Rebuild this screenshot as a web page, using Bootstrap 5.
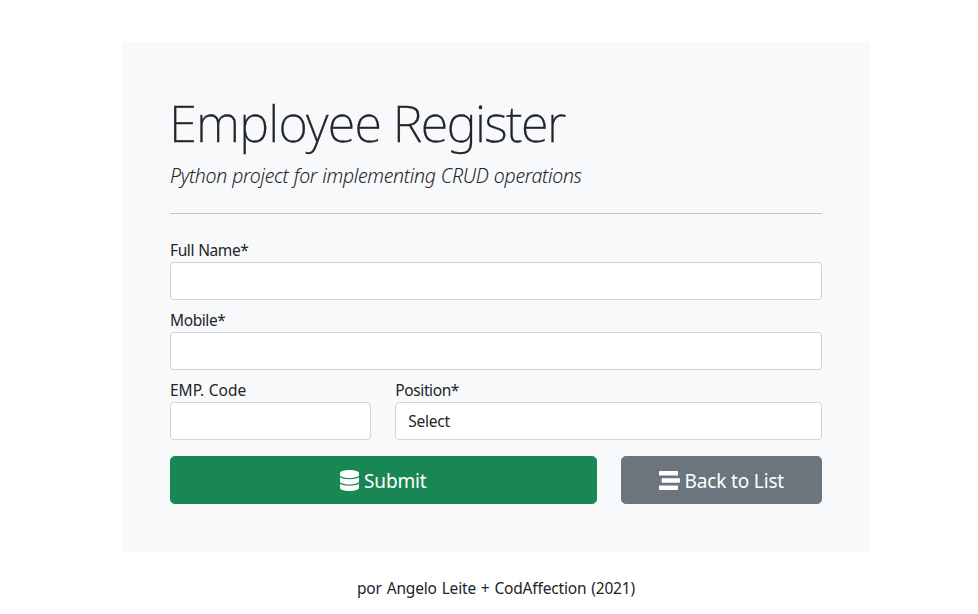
<!DOCTYPE html>
<html lang="en">
<head>
<meta charset="utf-8">
<title>Employee Register</title>
<meta name="viewport" content="width=device-width, initial-scale=1">
<link href="https://cdn.jsdelivr.net/npm/bootstrap@5.3.0/dist/css/bootstrap.min.css" rel="stylesheet">
<style>
body { font-family: "Noto Sans", "Open Sans", sans-serif; overflow: hidden; }
.page { width: 748px; margin-left: 122px; padding-top: 42px; }
.title { font-size: 50.5px; font-weight: 200; line-height: 66px; margin: 0 0 4px -1px; letter-spacing: -1.6px; white-space: nowrap; -webkit-text-stroke: .3px currentColor; }
.title-lead { letter-spacing: -.75px; }
.subtitle { font-size: 19.5px; font-weight: 300; line-height: 31px; margin-bottom: -2px; letter-spacing: -.32px; word-spacing: .5px; }
.rule { margin: 24px 0; color: #212529; }
.field-label { display: block; font-size: 15.5px; line-height: 24px; letter-spacing: -.4px; word-spacing: .5px; white-space: nowrap; }
.panel .form-control { height: 38px; border-color: #ced4da; border-radius: 4px; font-size: 15.5px; letter-spacing: -.25px; padding-top: 7px; padding-bottom: 5px; }
.panel .btn { height: 48px; border-radius: 4.8px; font-size: 19px; letter-spacing: -.15px; padding: 0; gap: 5px; }
.panel .btn span { padding-top: 2px; }
.panel .btn-success { background: #198754; }
.panel .btn-secondary { background: #6c757d; }
.credit { font-size: 15.5px; line-height: 24px; letter-spacing: -.17px; word-spacing: 1px; margin-top: 24px; }
.panel .emp-code { letter-spacing: 0; }
</style>
</head>
<body class="bg-white">
<div class="page">
  <main class="panel bg-light p-5">
    <h1 class="title"><span class="title-lead">Employee</span> Register</h1>
    <p class="subtitle fst-italic"><span>Python project for implementing CRUD operations</span></p>
    <hr class="rule">
    <form>
      <div class="mb-2">
        <label class="field-label" for="fullname">Full Name*</label>
        <input class="form-control" id="fullname" type="text">
      </div>
      <div class="mb-2">
        <label class="field-label" for="mobile">Mobile*</label>
        <input class="form-control" id="mobile" type="text">
      </div>
      <div class="row mb-3">
        <div class="col-4">
          <label class="field-label emp-code" for="code">EMP. Code</label>
          <input class="form-control" id="code" type="text">
        </div>
        <div class="col-8">
          <label class="field-label" for="position">Position*</label>
          <select class="form-control" id="position"><option>Select</option></select>
        </div>
      </div>
      <div class="row">
        <div class="col-8">
          <button type="button" class="btn btn-success w-100 d-flex align-items-center justify-content-center">
            <svg width="19" height="21" viewBox="0 0 448 512" preserveAspectRatio="none" fill="currentColor" aria-hidden="true"><path d="M448 73.1v45.8C448 159.100 347.700 192 224 192S0 159.100 0 118.900V73.100C0 32.900 100.300 0 224 0s224 32.900 224 73.100zM448 176v102.900C448 319.100 347.700 352 224 352S0 319.100 0 278.900V176c48.100 33.100 136.200 48.600 224 48.600S399.900 209.100 448 176zm0 160v102.900C448 479.100 347.700 512 224 512S0 479.100 0 438.900V336c48.100 33.100 136.200 48.600 224 48.600S399.900 369.100 448 336z"/></svg>
            <span>Submit</span>
          </button>
        </div>
        <div class="col-4">
          <a href="#" class="btn btn-secondary w-100 d-flex align-items-center justify-content-center">
            <svg width="21" height="19" viewBox="0 0 21 19" fill="currentColor" aria-hidden="true"><rect width="19" height="4.600" rx=".7"/><rect x="2.600" y="7.200" width="18.400" height="4.600" rx=".7"/><rect y="14.400" width="19" height="4.600" rx=".7"/></svg>
            <span>Back to List</span>
          </a>
        </div>
      </div>
    </form>
  </main>
  <footer class="credit text-center"><span>por Angelo Leite + CodAffection (2021)</span></footer>
</div>
<script src="https://cdn.jsdelivr.net/npm/bootstrap@5.3.0/dist/js/bootstrap.bundle.min.js"></script>
</body>
</html>
